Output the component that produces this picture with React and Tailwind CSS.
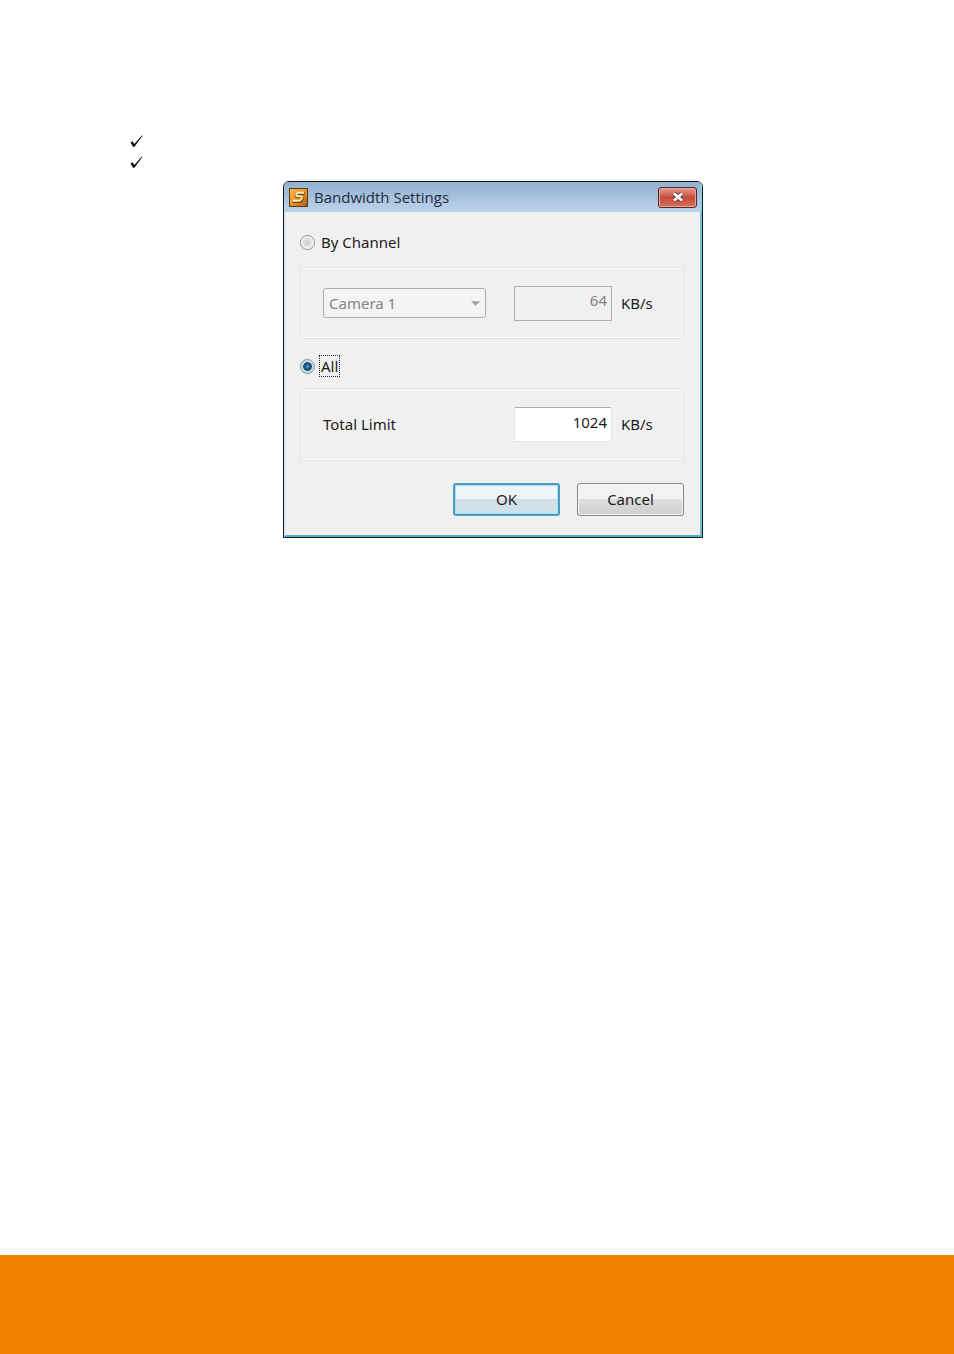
import React, { useState } from 'react';

export default function App() {
  return (
    <div className="flex min-h-screen flex-col bg-white text-[#1c1c1c] [font-family:'Noto_Sans','Open_Sans',sans-serif]">
      <main className="flex-1 pt-[130px]">
        <ul className="pl-[130px]">
          <li className="flex h-[21px] items-center">
            <CheckMark />
          </li>
          <li className="flex h-[21px] items-center">
            <CheckMark />
          </li>
        </ul>
        <div className="mt-[9px] flex justify-center pl-8">
          <BandwidthDialog />
        </div>
      </main>
      <footer className="h-[99px] bg-[#f08300]" />
    </div>
  );
}

function BandwidthDialog() {
  const [mode, setMode] = useState('all');
  const [channelLimit, setChannelLimit] = useState('64');
  const [totalLimit, setTotalLimit] = useState('1024');

  return (
    <section
      role="dialog"
      aria-labelledby="dialog-title"
      className="w-[420px] overflow-hidden rounded-t-md border border-[#10181c] bg-[#f0f0f0]"
    >
      <header className="flex h-[30px] items-center border-r-2 border-[#8fcfe6] bg-linear-to-b from-[#92b0d0] to-[#bdd3ec] pr-[3px] pl-[5px]">
        <AppIcon />
        <h1 id="dialog-title" className="ml-[6px] flex-1 text-[15px] leading-5 text-[#1e2c3e] [font-family:'Open_Sans',sans-serif]">
          Bandwidth Settings
        </h1>
        <button
          type="button"
          aria-label="Close"
          className="flex h-[21px] w-[39px] items-center justify-center rounded-[3px] border border-[#5b2424] bg-linear-to-b from-[#e0a095] via-[#c8493a] via-50% to-[#d4705c] shadow-[inset_0_0_0_1px_#e3a79c]"
        >
          <svg width="14" height="12" viewBox="0 0 14 12" aria-hidden="true">
            <path d="M3 2.5 11 9.5M11 2.5 3 9.5" stroke="#6b3a3a" strokeWidth="4.6" />
            <path d="M3 2.5 11 9.5M11 2.5 3 9.5" stroke="#fff" strokeWidth="2.8" />
          </svg>
        </button>
      </header>

      <form
        className="border-r-2 border-b-2 border-l-2 border-r-[#6cc3d8] border-b-[#4fb0c8] border-l-[#dde6f0] pt-[18px] pr-4 pb-[19px] pl-[14px] text-[15px]"
        onSubmit={(e) => e.preventDefault()}
      >
        <ModeOption label="By Channel" value="channel" mode={mode} onChange={setMode} />
        <div className="mt-[13px] flex h-[72px] items-center rounded-[3px] border border-[#dde1e5] px-[22px] shadow-[inset_0_0_0_1px_#fafafa]">
          <div className="relative w-[163px]">
            <select
              aria-label="Camera"
              disabled={mode !== 'channel'}
              className="h-[30px] w-full appearance-none rounded-[3px] border border-[#adadad] bg-[#f4f4f4] px-[5px] text-[#838383] opacity-100"
            >
              <option>Camera 1</option>
            </select>
            <svg className="pointer-events-none absolute top-[13px] right-[6px]" width="9" height="5" viewBox="0 0 10 5" aria-hidden="true">
              <path d="M0 0h10L5 5z" fill="#a0a0a0" />
            </svg>
          </div>
          <input
            type="text"
            aria-label="Channel limit in KB/s"
            disabled={mode !== 'channel'}
            value={channelLimit}
            onChange={(e) => setChannelLimit(e.target.value)}
            className="ml-7 h-[35px] w-[98px] border border-[#afafaf] bg-[#f0f0f0] px-1 pb-[6px] text-right text-[#838383]"
          />
          <span className="ml-[9px]">KB/s</span>
        </div>

        <div className="mt-[15px]">
          <ModeOption label="All" value="all" mode={mode} onChange={setMode} />
        </div>
        <div className="mt-[10px] flex h-[73px] items-center rounded-[3px] border border-[#dde1e5] px-[22px] shadow-[inset_0_0_0_1px_#fafafa]">
          <label htmlFor="total-limit" className="w-[163px]">
            Total Limit
          </label>
          <input
            id="total-limit"
            type="text"
            value={totalLimit}
            onChange={(e) => setTotalLimit(e.target.value)}
            className="ml-7 h-[35px] w-[98px] rounded-[2px] border border-[#e3e5ea] border-t-[#abadb3] bg-white px-1 pb-[6px] text-right"
          />
          <span className="ml-[9px]">KB/s</span>
        </div>

        <div className="mt-[22px] flex justify-end gap-[17px]">
          <button
            type="submit"
            className="h-[33px] w-[107px] rounded-[3px] border-2 border-[#4c9dbd] bg-linear-to-b from-[#eef5f8] from-50% via-[#d5dfe4] via-50% to-[#cbe3ec] shadow-[inset_0_0_0_1px_#a6e0f2]"
          >
            OK
          </button>
          <button
            type="button"
            className="h-[33px] w-[107px] rounded-[3px] border border-[#858585] bg-linear-to-b from-[#f2f2f2] from-50% via-[#dddddd] via-50% to-[#cfcfcf] shadow-[inset_0_0_0_1px_#f7f7f7]"
          >
            Cancel
          </button>
        </div>
      </form>
    </section>
  );
}

function ModeOption({ label, value, mode, onChange }) {
  const checked = mode === value;
  return (
    <label className="flex h-6 items-center">
      <input
        type="radio"
        name="mode"
        value={value}
        checked={checked}
        onChange={() => onChange(value)}
        className={`size-[15px] appearance-none rounded-full border ${
          checked
            ? 'border-[#7d98a6] bg-[radial-gradient(circle_at_50%_50%,#5fb0d6_0,#2a6d96_18%,#16405f_42%,#c9dde6_52%)]'
            : 'border-[#8e8f8f] bg-[radial-gradient(circle,#cfcfcf_0,#e2e2e2_45%,#f6f6f6_60%)]'
        }`}
      />
      <span
        className={`ml-1 border border-dotted px-px leading-5 ${checked ? 'border-[#222222]' : 'border-transparent'}`}
      >
        {label}
      </span>
    </label>
  );
}

function AppIcon() {
  return (
    <svg width="19" height="19" viewBox="0 0 19 19" aria-hidden="true">
      <defs>
        <linearGradient id="app-icon-fill" x1="0" y1="0" x2="1" y2="1">
          <stop offset="0" stopColor="#ffb84a" />
          <stop offset="0.5" stopColor="#e8962a" />
          <stop offset="1" stopColor="#a85a10" />
        </linearGradient>
      </defs>
      <rect x="0.5" y="0.5" width="18" height="18" fill="url(#app-icon-fill)" stroke="#5a3a1c" />
      <path d="M15.500 5.500H9C7 5.500 6.500 8.800 9 8.800H11.500C14.500 8.800 13 13.500 10 13.500H3.500" fill="none" stroke="#7a3e08" strokeWidth="3" />
      <path d="M15 4.800H9C7 4.800 6.500 8.200 9 8.200H11.500C14 8.200 12.500 12.700 10 12.700H3.500" fill="none" stroke="#ffefb8" strokeWidth="2" />
    </svg>
  );
}

function CheckMark() {
  return (
    <svg width="13" height="12" viewBox="0 0 13 12" aria-hidden="true">
      <path d="M0.500 7.500 2.500 6.300 4.300 9 12 0.300 12.500 0.700 4.500 11.700 3 11.700z" fill="#111" />
    </svg>
  );
}
